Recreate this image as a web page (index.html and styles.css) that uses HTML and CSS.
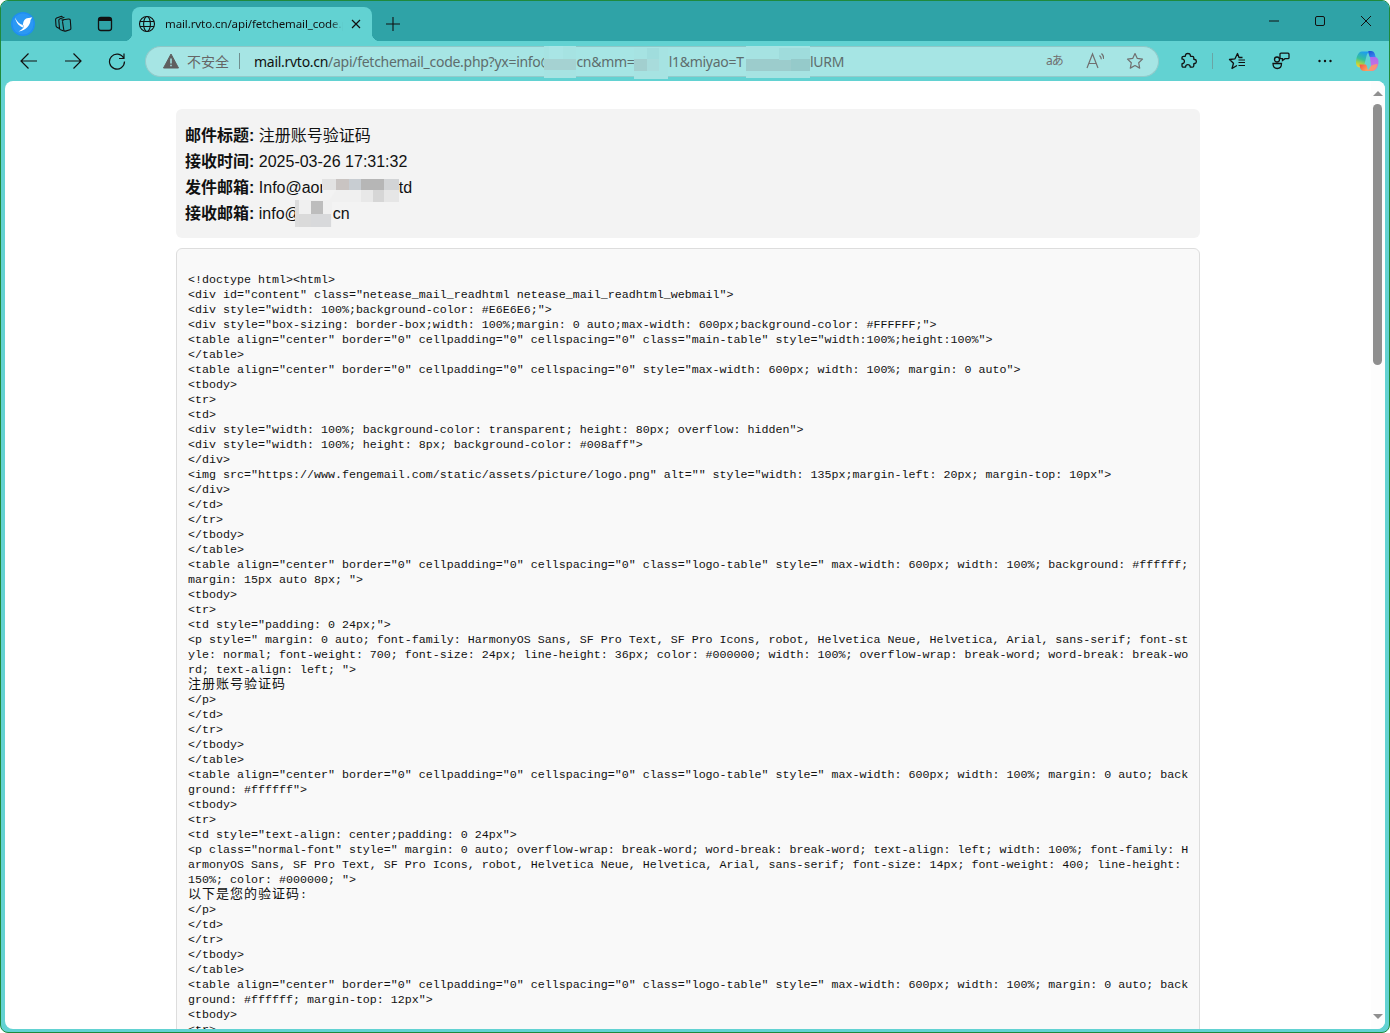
FILE: index.html
```html
<!DOCTYPE html>
<html lang="zh-CN">
<head>
<meta charset="utf-8">
<title>mail.rvto.cn</title>
<link rel="stylesheet" href="styles.css">
</head>
<body>
<div class="window">
  <header class="titlebar">
    <div class="tb-left">
      <svg class="logo" viewBox="0 0 24 24" width="24" height="24"><circle cx="12" cy="12" r="12" fill="#1f8ff2"/><circle cx="12" cy="12" r="10.500" fill="#2b98f4"/><path d="M4 5.500C6 10 9 12.500 12 13c0-4.500 2.500-7.500 6-7l3.200-.8-1.700 2.800C19.500 13 15 18.500 7.500 19.500c2.500-1.300 4-2.700 5-4C9 15 5 11 4 5.500z" fill="#fff"/><path d="M12 13c.5 1 .6 1.800.5 2.500" fill="none" stroke="#7cc0f5" stroke-width=".8"/></svg>
      <svg class="ic ic-tabs" viewBox="0 0 20 20" width="20" height="20"><g fill="none" stroke="#111" stroke-width="1.100" stroke-linejoin="round"><path d="M8.500 6 15.500 5c1-.1 1.700.3 1.800 1.300l.6 8c.1.800-.3 1.300-1 1.500l-4.400 1.300c-.9.2-1.600-.2-1.700-1.100L9.500 7.500"/><path d="M9.500 7.500c-.1-.9.400-1.400 1.200-1.500"/><path d="M10.800 17 7.600 15.800c-.7-.3-1-.8-1.100-1.600L5.800 6.500c-.1-.9.400-1.500 1.300-1.800l4.300-1.500"/><path d="M6.800 14.800 4 13.300c-.6-.4-1-1-1-1.700L2.600 5.800c-.1-.8.300-1.400 1-1.700l4.200-1.600c.7-.2 1.300 0 1.700.5"/></g></svg>
      <svg class="ic ic-vtab" viewBox="0 0 20 20" width="20" height="20"><rect x="3.500" y="3.500" width="13" height="13" rx="2.500" fill="none" stroke="#111" stroke-width="1.300"/><path d="M3.500 7V6A2.500 2.500 0 0 1 6 3.500h8A2.500 2.500 0 0 1 16.500 6v1z" fill="#111"/></svg>
      <div class="tab">
        <svg class="globe" viewBox="0 0 18 18" width="18" height="18"><g fill="none" stroke="#111" stroke-width="1.100"><circle cx="9" cy="9" r="7.500"/><ellipse cx="9" cy="9" rx="3.400" ry="7.500"/><path d="M2 6.500h14M2 11.500h14"/></g></svg>
        <span class="tab-title">mail.rvto.cn/api/fetchemail_code.php?yx=info</span>
        <svg class="tab-x" viewBox="0 0 10 10" width="10" height="10"><path d="M1 1l8 8M9 1l-8 8" stroke="#111" stroke-width="1.200"/></svg>
      </div>
      <svg class="ic ic-plus" viewBox="0 0 16 16" width="16" height="16"><path d="M8 1v14M1 8h14" stroke="#111" stroke-width="1.100"/></svg>
    </div>
    <div class="win-ctrls">
      <svg viewBox="0 0 10 10" width="10" height="10" class="wc wc-min"><path d="M0 5h10" stroke="#111" stroke-width="1"/></svg>
      <svg viewBox="0 0 10 10" width="10" height="10" class="wc wc-max"><rect x=".5" y=".5" width="9" height="9" rx="1.500" fill="none" stroke="#111"/></svg>
      <svg viewBox="0 0 10 10" width="10" height="10" class="wc wc-close"><path d="M0 0l10 10M10 0L0 10" stroke="#111" stroke-width="1"/></svg>
    </div>
  </header>

  <nav class="toolbar">
    <svg class="nav nav-back" viewBox="0 0 18 18" width="18" height="18"><path d="M1 9h16M8.500 1.500 1 9l7.500 7.500" fill="none" stroke="#111" stroke-width="1.200"/></svg>
    <svg class="nav nav-fwd" viewBox="0 0 18 18" width="18" height="18"><path d="M1 9h16M9.500 1.500 17 9l-7.500 7.500" fill="none" stroke="#111" stroke-width="1.200"/></svg>
    <svg class="nav nav-ref" viewBox="0 0 18 18" width="18" height="18"><path d="M15.700 6.200A7.500 7.500 0 1 0 16.500 9.500M16 1.500v5h-5" fill="none" stroke="#111" stroke-width="1.200"/></svg>
    <div class="addr">
      <svg class="warn" viewBox="0 0 16 16" width="16" height="16"><path d="M8 1 .5 15h15z" fill="#5f5f5f" stroke="#5f5f5f" stroke-linejoin="round"/><path d="M8 5.500v5M8 11.800v1.500" stroke="#a6e5e4" stroke-width="1.500"/></svg>
      <span class="insecure">不安全</span>
      <span class="addr-sep"></span>
      <span class="url"><b class="host">mail.rvto.cn</b>/api/fetchemail_code.php?yx=info@<i class="gap gap-a"></i>cn&amp;mm=<i class="gap gap-b"></i>l1&amp;miyao=T<i class="gap gap-c"></i>lURM</span>
      <svg class="mosaic mos-a" viewBox="0 0 32 32" width="32" height="32"><rect width="32" height="32" fill="#a6e3e2"/><rect y="13" width="32" height="11" fill="#a5d2d2"/><rect x="5" y="0" width="14" height="13" fill="#a9e5e5"/></svg>
      <svg class="mosaic mos-b" viewBox="0 0 34 31" width="34" height="31"><rect width="34" height="31" fill="#a6e3e2"/><rect x="0" y="11" width="13" height="12" fill="#a2cfcf"/><rect x="13" y="11" width="12" height="12" fill="#a8dcdc"/><rect x="13" y="0" width="12" height="11" fill="#a0dddd"/></svg>
      <svg class="mosaic mos-c" viewBox="0 0 64 32" width="64" height="32"><rect width="64" height="32" fill="#a6e3e2"/><rect x="0" y="13" width="64" height="12" fill="#9ccccc"/><rect x="33" y="2" width="31" height="12" fill="#9fdcdc"/><rect x="45" y="13" width="19" height="12" fill="#95caca"/></svg>
      <span class="addr-right">
        <span class="ai-txt">aあ</span>
        <svg class="ai" viewBox="0 0 18 18" width="18" height="18"><path d="M1 16 6.500 2 12 16M3 11.500h7M13.500 3.500c1.200 1 1.800 2.300 1.800 3.800M15.500 1.500c1.500 1.400 2.300 3.300 2.300 5.500" fill="none" stroke="#707070" stroke-width="1.200"/></svg>
        <svg class="ai" viewBox="0 0 18 18" width="18" height="18"><path d="M9 1.500l2.300 4.900 5.200.7-3.800 3.700 1 5.300L9 13.500l-4.700 2.600 1-5.300L1.500 7.100l5.200-.7z" fill="none" stroke="#707070" stroke-width="1.200" stroke-linejoin="round"/></svg>
      </span>
    </div>
    <div class="tools">
      <svg class="tool" viewBox="0 0 18 18" width="18" height="18"><path d="M6.500 3c.3-2 4.500-2 4.800 0 .1.500-.2 1 .3 1.300h1.700c1 0 1.500.6 1.500 1.500V7.300c.3.400.8.100 1.200.2 1.800.4 1.800 3.600 0 4-.4.100-.9-.2-1.200.2v2c0 .9-.5 1.500-1.500 1.500h-1.900c-.5-.3-.2-.9-.4-1.400-.6-1.500-3.700-1.500-4.200 0-.1.500.1 1.100-.4 1.400H4.500c-1 0-1.500-.6-1.500-1.500v-1.900c.3-.5.800-.2 1.300-.4 1.500-.6 1.500-3.500 0-4.100C3.800 7.100 3.300 7.400 3 7V5.800c0-.9.500-1.500 1.500-1.500h1.700c.5-.3.200-.8.300-1.300z" fill="none" stroke="#111" stroke-width="1.300"/></svg>
      <span class="tool-sep"></span>
      <svg class="tool t-fav" viewBox="0 0 18 18" width="18" height="18"><path d="M14.500 5.500H11L9.500 1.500 7 6.800l-5.500.7 4 3.800-1.500 5.200 5-3" fill="none" stroke="#111" stroke-width="1.300" stroke-linejoin="round"/><path d="M10.500 8h6.500M10.500 10.500h6.500M10.500 13.500h6.500" stroke="#111" stroke-width="1.200"/></svg>
      <svg class="tool t-col" viewBox="0 0 18 18" width="18" height="18"><g fill="none" stroke="#111" stroke-width="1.300"><circle cx="5" cy="7.500" r="2.500"/><path d="M1 11.500h8.500c0 3.500-1.800 5-4.300 5s-4.200-1.500-4.200-5z"/><path d="M9 1.200h7c.6 0 1 .4 1 1v3.500c0 .6-.4 1-1 1h-3l-2.500 1.800V6.700H9c-.6 0-1-.4-1-1V2.200c0-.6.400-1 1-1z"/></g></svg>
      <svg class="tool t-more" viewBox="0 0 18 18" width="18" height="18"><circle cx="3.500" cy="9" r="1.200" fill="#111"/><circle cx="9" cy="9" r="1.200" fill="#111"/><circle cx="14.500" cy="9" r="1.200" fill="#111"/></svg>
      <svg class="copilot" viewBox="0 0 24 24" width="24" height="24">
        <defs>
          <linearGradient id="cpA" x1=".6" y1="0" x2=".3" y2="1"><stop offset="0" stop-color="#1d9cf0"/><stop offset=".5" stop-color="#35c29a"/><stop offset=".8" stop-color="#b5d53a"/><stop offset="1" stop-color="#f2cf3a"/></linearGradient>
          <linearGradient id="cpB" x1=".2" y1="0" x2=".8" y2="1"><stop offset="0" stop-color="#1a55d8"/><stop offset="1" stop-color="#3d8bf2"/></linearGradient>
          <linearGradient id="cpD" x1=".5" y1="0" x2=".5" y2="1"><stop offset="0" stop-color="#a86cf0"/><stop offset=".6" stop-color="#c66fe0"/><stop offset="1" stop-color="#ee7ab0"/></linearGradient>
          <linearGradient id="cpC" x1="0" y1="0" x2="1" y2=".6"><stop offset="0" stop-color="#f14e47"/><stop offset=".45" stop-color="#f8764e"/><stop offset="1" stop-color="#fba160"/></linearGradient>
        </defs>
        <path d="M7 2.500h8c-2 .8-3 2.500-3.500 4.500L9.500 15c-.6 2.200-1.800 3.500-4 3.500-3 0-4.500-2-4.500-4.800C1 8.500 3 2.500 7 2.500z" fill="url(#cpA)"/>
        <path d="M13.500 2H16c2 0 3.200 1.200 3.800 3l1 3.500H16c-.9 0-1.500-.7-1.800-1.700l-.8-3c-.1-.7-.2-1.300.1-1.800z" fill="url(#cpB)"/>
        <path d="M15 8h4.500c2.500 0 4 2 4 4.800 0 5-2.500 9.200-6.500 9.200h-4.500c2-1 3-2.500 3.500-4.500z" fill="url(#cpD)"/>
        <path d="M4.500 15.500H10c1 0 1.600.7 1.900 1.700l.8 3c.2.800.5 1.500 1 1.800H9c-2 0-3.200-1.200-3.800-3z" fill="url(#cpC)"/>
        <path d="M10.500 22h6c3 0 5.500-3 6-7-2 .5-4.500.5-6 1.500-1.500 1-2 3-3 4-1 .8-2 1.300-3 1.500z" fill="#fb9a63" opacity=".85"/>
      </svg>
    </div>
  </nav>

  <main class="viewport">
    <div class="page">
      <div class="scroll-area">
        <section class="info">
          <p><strong>邮件标题:</strong> 注册账号验证码</p>
          <p><strong>接收时间:</strong> 2025-03-26 17:31:32</p>
          <p><strong>发件邮箱:</strong> Info@aor<i class="igap igap-a"></i>td</p>
          <p><strong>接收邮箱:</strong> info@<i class="igap igap-b"></i>cn</p>
          <svg class="mosaic mos-d" viewBox="0 0 77 23" width="77" height="23"><path d="M0 0h77v23H6L14 11H0z" fill="#f0f0f0"/><rect x="0" y="0" width="14" height="11" fill="#e2e2e2"/><rect x="14" y="0" width="13" height="11" fill="#c9c4c2"/><rect x="27" y="0" width="12" height="11" fill="#c8cdd2"/><rect x="39" y="0" width="23" height="11" fill="#b6b6b6"/><rect x="62" y="0" width="15" height="11" fill="#d2d4d6"/><rect x="39" y="11" width="12" height="12" fill="#e8e8e8"/><rect x="51" y="11" width="11" height="12" fill="#d6d6d6"/><rect x="62" y="11" width="15" height="12" fill="#e6e6e6"/></svg>
          <svg class="mosaic mos-e" viewBox="0 0 37 27" width="37" height="27"><rect width="37" height="27" fill="#f0f0f0"/><rect x="0" y="0" width="4" height="27" fill="#dcdcdc"/><rect x="4" y="14" width="12" height="13" fill="#dadada"/><rect x="16" y="1" width="12" height="13" fill="#bdbdbd"/><rect x="16" y="14" width="20" height="13" fill="#d8d9db"/></svg>
        </section>
<pre class="code">

&lt;!doctype html&gt;&lt;html&gt;
&lt;div id="content" class="netease_mail_readhtml netease_mail_readhtml_webmail"&gt;
&lt;div style="width: 100%;background-color: #E6E6E6;"&gt;
&lt;div style="box-sizing: border-box;width: 100%;margin: 0 auto;max-width: 600px;background-color: #FFFFFF;"&gt;
&lt;table align="center" border="0" cellpadding="0" cellspacing="0" class="main-table" style="width:100%;height:100%"&gt;
&lt;/table&gt;
&lt;table align="center" border="0" cellpadding="0" cellspacing="0" style="max-width: 600px; width: 100%; margin: 0 auto"&gt;
&lt;tbody&gt;
&lt;tr&gt;
&lt;td&gt;
&lt;div style="width: 100%; background-color: transparent; height: 80px; overflow: hidden"&gt;
&lt;div style="width: 100%; height: 8px; background-color: #008aff"&gt;
&lt;/div&gt;
&lt;img src="https://www.fengemail.com/static/assets/picture/logo.png" alt="" style="width: 135px;margin-left: 20px; margin-top: 10px"&gt;
&lt;/div&gt;
&lt;/td&gt;
&lt;/tr&gt;
&lt;/tbody&gt;
&lt;/table&gt;
&lt;table align="center" border="0" cellpadding="0" cellspacing="0" class="logo-table" style=" max-width: 600px; width: 100%; background: #ffffff;
margin: 15px auto 8px; "&gt;
&lt;tbody&gt;
&lt;tr&gt;
&lt;td style="padding: 0 24px;"&gt;
&lt;p style=" margin: 0 auto; font-family: HarmonyOS Sans, SF Pro Text, SF Pro Icons, robot, Helvetica Neue, Helvetica, Arial, sans-serif; font-st
yle: normal; font-weight: 700; font-size: 24px; line-height: 36px; color: #000000; width: 100%; overflow-wrap: break-word; word-break: break-wo
rd; text-align: left; "&gt;
<span class="cjk">注册账号验证码</span>
&lt;/p&gt;
&lt;/td&gt;
&lt;/tr&gt;
&lt;/tbody&gt;
&lt;/table&gt;
&lt;table align="center" border="0" cellpadding="0" cellspacing="0" class="logo-table" style=" max-width: 600px; width: 100%; margin: 0 auto; back
ground: #ffffff"&gt;
&lt;tbody&gt;
&lt;tr&gt;
&lt;td style="text-align: center;padding: 0 24px"&gt;
&lt;p class="normal-font" style=" margin: 0 auto; overflow-wrap: break-word; word-break: break-word; text-align: left; width: 100%; font-family: H
armonyOS Sans, SF Pro Text, SF Pro Icons, robot, Helvetica Neue, Helvetica, Arial, sans-serif; font-size: 14px; font-weight: 400; line-height:
150%; color: #000000; "&gt;
<span class="cjk">以下是您的验证码</span>:
&lt;/p&gt;
&lt;/td&gt;
&lt;/tr&gt;
&lt;/tbody&gt;
&lt;/table&gt;
&lt;table align="center" border="0" cellpadding="0" cellspacing="0" class="logo-table" style=" max-width: 600px; width: 100%; margin: 0 auto; back
ground: #ffffff; margin-top: 12px"&gt;
&lt;tbody&gt;
&lt;tr&gt;
</pre>
      </div>
      <aside class="scrollbar">
        <span class="arrow arrow-up"></span>
        <span class="track"><span class="thumb"></span></span>
        <span class="arrow arrow-down"></span>
      </aside>
    </div>
  </main>
</div>
</body>
</html>
```

FILE: styles.css
```css
* { box-sizing: border-box; }
html, body { margin: 0; height: 100%; background: #fff; overflow: hidden; }
body { font-family: "Noto Sans", "Noto Sans CJK SC", sans-serif; }

.window {
  width: 1390px;
  height: 1033px;
  display: flex;
  flex-direction: column;
  border: 1px solid #1f8a3c;
  border-radius: 8px;
  background: #62d2d2;
  overflow: hidden;
}

/* title bar */
.titlebar {
  height: 40px;
  flex: none;
  display: flex;
  justify-content: space-between;
  background: #2fa3a7;
}
.tb-left { display: flex; align-items: flex-end; }
.logo { margin: 0 0 5px 10px; }
.ic { flex: none; }
.ic-tabs { margin: 0 0 7px 18px; }
.ic-vtab { margin: 0 0 7px 22px; }
.tab {
  position: relative;
  width: 240px;
  height: 34px;
  margin-left: 17px;
  display: flex;
  align-items: center;
  background: #62d2d2;
  border-radius: 8px 8px 0 0;
  padding: 0 11px 0 6px;
}
.tab::before, .tab::after {
  content: "";
  position: absolute;
  bottom: 0;
  width: 8px;
  height: 8px;
}
.tab::before { left: -8px; background: radial-gradient(circle at 0 0, #2fa3a7 8px, #62d2d2 8.5px); }
.tab::after { right: -8px; background: radial-gradient(circle at 100% 0, #2fa3a7 8px, #62d2d2 8.5px); }
.globe { flex: none; }
.tab-title {
  margin: -2px 0 0 9px;
  width: 178px;
  font-size: 11.5px;
  letter-spacing: -.1px;
  color: #111;
  white-space: nowrap;
  overflow: hidden;
  -webkit-mask-image: linear-gradient(90deg, #000 165px, transparent 178px);
  mask-image: linear-gradient(90deg, #000 165px, transparent 178px);
}
.tab-x { margin-left: 8px; flex: none; }
.ic-plus { margin: 0 0 9px 13px; }
.win-ctrls { display: flex; align-items: flex-start; padding-top: 15px; }
.wc { display: block; }
.wc-max { margin-left: 36px; }
.wc-close { margin: 0 18px 0 36px; }

/* toolbar */
.toolbar {
  height: 40px;
  flex: none;
  display: flex;
  align-items: center;
  background: #62d2d2;
}
.nav { flex: none; }
.nav-back { margin-left: 19px; }
.nav-fwd { margin-left: 26px; }
.nav-ref { margin-left: 26px; }
.addr {
  position: relative;
  width: 1014px;
  height: 31px;
  margin-left: 19px;
  display: flex;
  align-items: center;
  background: #a6e5e4;
  border: 1px solid #93cbcb;
  border-top-color: #8ec7c7;
  border-radius: 16px;
  font-size: 14px;
}
.warn { margin-left: 17px; flex: none; }
.insecure { margin-left: 8px; font-size: 14px; color: #666; }
.addr-sep { width: 1px; height: 16px; margin-left: 10px; background: #6f8f8f; }
.url { margin-left: 14px; font-size: 14px; color: #5e6d6d; white-space: nowrap; letter-spacing: -.28px; }
.host { font-weight: 400; color: #111; }
.gap { display: inline-block; }
.gap-a { width: 23.5px; }
.gap-b { width: 34.2px; }
.gap-c { width: 66.3px; }
.mosaic { position: absolute; display: block; }
.mos-a { left: 398px; top: -1px; }
.mos-b { left: 488px; top: 1px; }
.mos-c { left: 600px; top: -1px; }
.addr-right {
  position: absolute;
  right: 14px;
  top: 5px;
  display: flex;
  align-items: center;
  gap: 22px;
}
.ai { display: block; }
.ai-txt {
  display: block;
  width: 18px;
  font-size: 12px;
  line-height: 18px;
  letter-spacing: -1px;
  white-space: nowrap;
  color: #707070;
  font-family: "Noto Sans", "Noto Sans CJK JP", sans-serif;
}
.tools { display: flex; align-items: center; margin-left: 20px; }
.tool { flex: none; }
.tool-sep { width: 1px; height: 16px; margin-left: 15px; background: #6aa5a5; }
.t-fav { margin-left: 15px; }
.t-col { margin-left: 26px; }
.t-more { margin-left: 26px; }
.copilot { margin-left: 21px; flex: none; }

/* content */
.viewport {
  flex: 1;
  min-height: 0;
  margin: 0 4px 3px;
  background: #fff;
  border-radius: 8px;
  overflow: hidden;
}
.page { display: flex; height: 100%; }
.scroll-area {
  flex: 1;
  min-width: 0;
  height: 100%;
  overflow: hidden;
  padding-top: 28px;
}
.info {
  position: relative;
  width: 1024px;
  height: 129px;
  margin: 0 auto 10px;
  padding: 14px 9px 11px;
  background: #f3f3f3;
  border-radius: 6px;
  font-family: "Liberation Sans", "Noto Sans CJK SC", sans-serif;
  font-size: 16px;
  line-height: 26px;
  color: #111;
}
.info p { margin: 0; white-space: nowrap; }
.info strong { font-weight: 700; }
.igap { display: inline-block; }
.igap-a { width: 74px; }
.igap-b { width: 32px; }
.mos-d { left: 146px; top: 70px; }
.mos-e { left: 119px; top: 91px; }
.code {
  width: 1024px;
  margin: 0 auto;
  padding: 9px 11px;
  background: #f9f9f9;
  border: 1px solid #ddd;
  border-radius: 6px;
  font-family: "Liberation Mono", "Noto Sans CJK SC", monospace;
  font-size: 11.67px;
  line-height: 15px;
  color: #111;
  white-space: pre;
}
.cjk {
  display: inline-block;
  height: 15px;
  line-height: 9px;
  vertical-align: top;
  font-family: "Noto Sans CJK SC", sans-serif;
  font-size: 13px;
  letter-spacing: 1px;
}

/* scrollbar */
.scrollbar {
  width: 14px;
  flex: none;
  height: 100%;
  display: flex;
  flex-direction: column;
  align-items: center;
  background: #fdfdfd;
  padding: 10px 1px 10px 0;
}
.arrow { width: 0; height: 0; border-left: 5px solid transparent; border-right: 5px solid transparent; flex: none; }
.arrow-up { border-bottom: 5px solid #8f8f8f; }
.arrow-down { border-top: 5px solid #8f8f8f; }
.track { flex: 1; width: 100%; display: flex; justify-content: center; padding-top: 8px; }
.thumb { width: 9px; height: 261px; background: #8f8f8f; border-radius: 5px; }
```
